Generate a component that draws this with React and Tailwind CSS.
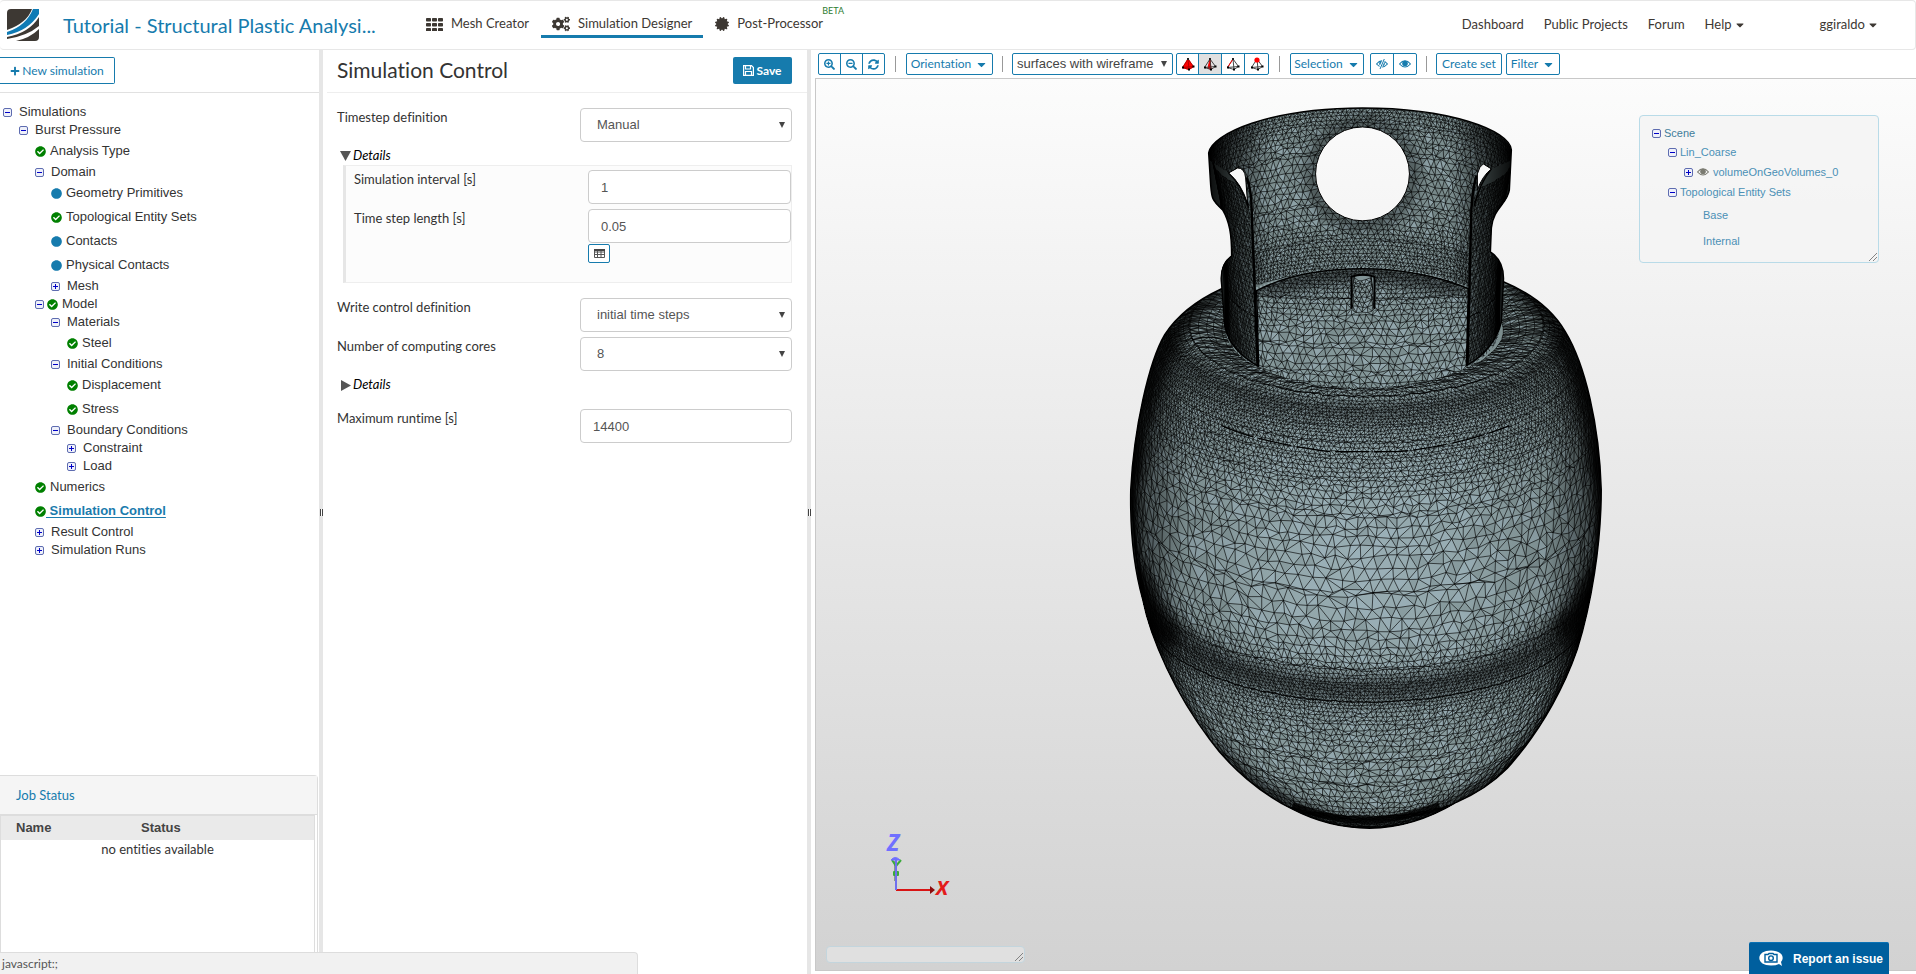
import React, { useMemo, useState } from 'react'
import { FaCogs, FaCertificate, FaPlus, FaCheckCircle, FaCircle, FaSearchPlus, FaSearchMinus, FaSyncAlt, FaCaretDown } from 'react-icons/fa'

const treeNodes = [
    { label: 'Simulations', depth: 0, open: true },
    { label: 'Burst Pressure', depth: 1, open: true },
    { label: 'Analysis Type', depth: 2, status: 'done' },
    { label: 'Domain', depth: 2, open: true },
    { label: 'Geometry Primitives', depth: 3, status: 'info' },
    { label: 'Topological Entity Sets', depth: 3, status: 'done' },
    { label: 'Contacts', depth: 3, status: 'info' },
    { label: 'Physical Contacts', depth: 3, status: 'info' },
    { label: 'Mesh', depth: 3, open: false },
    { label: 'Model', depth: 2, open: true, status: 'done' },
    { label: 'Materials', depth: 3, open: true },
    { label: 'Steel', depth: 4, status: 'done' },
    { label: 'Initial Conditions', depth: 3, open: true },
    { label: 'Displacement', depth: 4, status: 'done' },
    { label: 'Stress', depth: 4, status: 'done' },
    { label: 'Boundary Conditions', depth: 3, open: true },
    { label: 'Constraint', depth: 4, open: false },
    { label: 'Load', depth: 4, open: false },
    { label: 'Numerics', depth: 2, status: 'done' },
    { label: 'Simulation Control', depth: 2, status: 'done', active: true },
    { label: 'Result Control', depth: 2, open: false },
    { label: 'Simulation Runs', depth: 2, open: false },
]

const indents = ['pl-[3px]', 'pl-[19px]', 'pl-[35px]', 'pl-[51px]', 'pl-[67px]']

function makeRandom(seed) {
    let s = seed
    return () => {
        s = (s * 1664525 + 1013904223) % 4294967296
        return s / 4294967296
    }
}

// Resample a list of [y, r, k, spacing, from, to] stations into rings of points
function buildRings(stations, cx, random) {
    const rings = []
    for (let i = 0; i < stations.length - 1; i++) {
        const a = stations[i]
        const b = stations[i + 1]
        const len = Math.hypot(b[0] - a[0] + (b[1] * b[2] - a[1] * a[2]), (b[1] - a[1]) * 0.4)
        let t = 0
        while (t < 1) {
            const [y, r, k, gap, from, to] = a.map((v, j) => v + (b[j] - v) * t)
            const count = Math.max(4, Math.round((Math.abs(to - from) * r) / (gap * 1.15)))
            const step = (to - from) / count
            const shift = rings.length % 2 ? 0.5 : 0
            const ring = []
            for (let n = 0; n <= count; n++) {
                const angle = from + step * (n + shift + (random() - 0.5) * 0.5)
                const bump = (random() - 0.5) * gap * 0.5
                ring.push([cx + r * Math.sin(angle), y + bump + r * k * Math.cos(angle), angle])
            }
            rings.push(ring)
            t += gap / Math.max(len, 1)
        }
    }
    return rings
}

// Join neighbouring rings with triangles, always advancing on the ring that lags behind
function buildMesh(stations, cx, seed) {
    const random = makeRandom(seed)
    const rings = buildRings(stations, cx, random)
    const p = (v) => `${v[0].toFixed(1)} ${v[1].toFixed(1)}`
    let lines = ''
    let light = ''
    let dark = ''
    rings.forEach((ring, i) => {
        lines += 'M' + ring.map(p).join('L')
        const next = rings[i + 1]
        if (!next) return
        let a = 0
        let b = 0
        while (a < ring.length - 1 || b < next.length - 1) {
            const moveA = b >= next.length - 1 || (a < ring.length - 1 && ring[a + 1][2] < next[b + 1][2])
            const tip = moveA ? ring[a + 1] : next[b + 1]
            const face = `M${p(ring[a])}L${p(next[b])}L${p(tip)}Z`
            const roll = random()
            if (roll < 0.25) light += face
            else if (roll > 0.8) dark += face
            lines += `M${p(ring[a])}L${p(next[b])}`
            if (moveA) a++
            else b++
        }
    })
    return { lines, light, dark }
}

const FULL = Math.PI
const bodyStations = [
    [331, 137, 0.4, 3.6, -FULL, FULL],
    [327, 160, 0.4, 4.4, -FULL, FULL],
    [326, 178, 0.4, 4.4, -2.6, 2.6],
    [332, 196, 0.4, 3.2, -2.2, 2.2],
    [345, 208, 0.4, 3.2, -1.9, 1.9],
    [358, 215, 0.4, 4.2, -1.75, 1.75],
    [372, 219, 0.4, 4.4, -1.7, 1.7],
    [392, 224, 0.4, 5.5, -1.6, 1.6],
    [425, 231, 0.41, 9, -1.57, 1.57],
    [500, 235, 0.41, 12.5, -1.57, 1.57],
    [545, 232, 0.41, 9, -1.57, 1.57],
    [578, 227, 0.41, 4.6, -1.57, 1.57],
    [594, 225, 0.41, 3.2, -1.57, 1.57],
    [612, 221, 0.41, 3.4, -1.57, 1.57],
    [638, 215, 0.41, 5.2, -1.55, 1.55],
    [684, 195, 0.41, 7, -1.5, 1.5],
    [714, 177, 0.41, 7, -1.45, 1.45],
    [740, 157, 0.41, 5.6, -1.4, 1.4],
    [761, 138, 0.41, 4, -1.25, 1.25],
    [778, 118, 0.36, 2.8, -1.15, 1.15],
    [792, 98, 0.36, 2.4, -1.1, 1.1],
    [800, 80, 0.36, 2.4, -1.1, 1.1],
]
const domeStations = [
    [262, 150, 0.06, 3.2, -1.57, 1.57],
    [288, 150, 0.08, 5, -1.57, 1.57],
    [330, 150, 0.12, 8.5, -1.57, 1.57],
    [352, 150, 0.16, 7, -1.57, 1.57],
    [368, 150, 0.2, 4.4, -1.57, 1.57],
]
const wallStations = [
    [154, 151, -0.3, 3.4, -1.57, 1.57],
    [168, 150, -0.3, 4.6, -1.57, 1.57],
    [195, 147, -0.28, 7, -1.57, 1.57],
    [245, 141, -0.28, 6.6, -1.57, 1.57],
    [280, 138, -0.28, 4, -1.57, 1.57],
    [312, 137, -0.28, 3.4, -1.57, 1.57],
]
const panelStations = (from, to) => [
    [160, 150, 0.3, 4, from, to],
    [200, 142, 0.3, 4.6, from, to],
    [285, 137, 0.38, 4.8, from, to],
    [334, 137, 0.4, 3.8, from, to],
]
const valveStations = [
    [277, 9, 0.4, 4, -1.6, 1.6],
    [284, 10, 0.4, 5, -1.6, 1.6],
    [310, 12, 0.4, 5, -1.6, 1.6],
]

const BODY = 'M1222 289C1196 301 1176 318 1165 335C1149 362 1134 430 1131 490C1130 540 1136 575 1143 600C1151 640 1176 695 1210 740C1230 768 1262 795 1293 810C1316 822 1343 829 1370 829C1402 829 1432 818 1457 803C1476 795 1494 783 1508 769C1545 728 1567 682 1578 650C1592 605 1602 545 1602 490C1600 425 1586 365 1566 332C1552 308 1528 292 1504 282L1363 250Z'
const COLLAR = 'M1209 153C1212 134 1270 108 1363 108C1450 108 1510 130 1512 150L1510 190C1508 204 1494 208 1492 228L1491 252C1500 258 1505 268 1504 282L1502 322C1498 340 1485 356 1467 366L1469 289C1440 276 1400 269 1363 269C1320 269 1285 276 1257 291L1259 367C1240 356 1229 344 1225 326L1222 285C1220 270 1224 262 1232 256C1232 235 1230 222 1223 210C1212 200 1212 198 1211 185Z'
const HOLES = 'M1316 174a47 47 0 1 0 94 0a47 47 0 1 0 -94 0ZM1229 173L1238 168Q1245 168 1246 178L1248 204Q1242 184 1229 173ZM1478 190L1478 174Q1480 166 1484 164L1492 169Q1483 176 1478 190Z'

function MeshLayer({ mesh, width = 0.8 }) {
    return (
        <>
            <path d={mesh.light} fill="#9db4bd" fillOpacity="0.5" />
            <path d={mesh.dark} fill="#5f7070" fillOpacity="0.2" />
            <path d={mesh.lines} fill="none" stroke="#000" strokeWidth={width} strokeOpacity="0.8" />
        </>
    )
}

function TankModel() {
    const meshes = useMemo(() => ({
        body: buildMesh(bodyStations, 1367, 7),
        dome: buildMesh(domeStations, 1363, 21),
        wall: buildMesh(wallStations, 1361, 33),
        left: buildMesh(panelStations(-1.57, -0.75), 1363, 5),
        right: buildMesh(panelStations(0.75, 1.57), 1363, 9),
        valve: buildMesh(valveStations, 1363, 11),
    }), [])

    return (
        <svg className="absolute inset-0 w-full h-full" viewBox="816 79 1101 892" role="img" aria-label="Meshed gas tank">
            <defs>
                <linearGradient id="side">
                    <stop offset="0" stopColor="#000" stopOpacity="0.95" />
                    <stop offset="0.03" stopColor="#000" stopOpacity="0.5" />
                    <stop offset="0.12" stopColor="#000" stopOpacity="0.1" />
                    <stop offset="0.3" stopColor="#000" stopOpacity="0" />
                    <stop offset="0.7" stopColor="#000" stopOpacity="0" />
                    <stop offset="0.88" stopColor="#000" stopOpacity="0.1" />
                    <stop offset="0.97" stopColor="#000" stopOpacity="0.5" />
                    <stop offset="1" stopColor="#000" stopOpacity="0.95" />
                </linearGradient>
                <linearGradient id="wallSide">
                    <stop offset="0" stopColor="#000" stopOpacity="0.9" />
                    <stop offset="0.12" stopColor="#000" stopOpacity="0.4" />
                    <stop offset="0.2" stopColor="#000" stopOpacity="0" />
                    <stop offset="0.8" stopColor="#000" stopOpacity="0" />
                    <stop offset="0.88" stopColor="#000" stopOpacity="0.4" />
                    <stop offset="1" stopColor="#000" stopOpacity="0.9" />
                </linearGradient>
                <radialGradient id="shell" gradientUnits="userSpaceOnUse" cx="1366" cy="560" r="290">
                    <stop offset="0" stopColor="#9aafb5" />
                    <stop offset="1" stopColor="#7f9191" />
                </radialGradient>
                <filter id="soft" x="-20%" y="-20%" width="140%" height="140%">
                    <feGaussianBlur stdDeviation="7" />
                </filter>
                <clipPath id="bodyClip"><path d={BODY} /></clipPath>
                <clipPath id="domeClip"><ellipse cx="1363" cy="330" rx="137" ry="58" /></clipPath>
                <clipPath id="collarClip"><path d={COLLAR + HOLES} clipRule="evenodd" /></clipPath>
                <clipPath id="leftClip"><path d="M1209 160L1229 173Q1244 188 1250 210L1259 368L1209 368Z" /></clipPath>
                <clipPath id="rightClip"><path d="M1513 160L1492 169Q1478 186 1474 204L1467 368L1513 368Z" /></clipPath>
            </defs>

            <g clipPath="url(#bodyClip)">
                <path d={BODY} fill="url(#shell)" />
                <MeshLayer mesh={meshes.body} />
                <g fill="none" stroke="#000" filter="url(#soft)">
                    <path d="M1140 590Q1200 690 1366 690T1592 590" strokeWidth="22" strokeOpacity="0.4" />
                    <path d="M1135 570Q1146 612 1175 642M1598 570Q1588 606 1560 636" strokeWidth="24" strokeOpacity="0.8" />
                    <path d="M1172 345Q1230 412 1366 412T1560 345" strokeWidth="14" strokeOpacity="0.35" />
                    <path d="M1131 560C1140 650 1170 710 1210 748C1262 800 1320 829 1370 829C1430 829 1490 790 1520 762C1565 705 1590 650 1602 560" strokeWidth="14" strokeOpacity="0.85" />
                    <path d="M1222 289C1170 312 1145 380 1133 480M1510 284C1570 312 1592 400 1600 480" strokeWidth="18" strokeOpacity="0.8" />
                </g>
                <path d={BODY} fill="url(#side)" />
                <path d="M1222 426Q1260 443 1330 452H1400Q1460 446 1510 426" fill="none" stroke="#000" strokeWidth="1.2" strokeDasharray="34 5" />
                <path d="M1293 806Q1366 836 1440 806" fill="none" stroke="#000" strokeWidth="7" strokeOpacity="0.8" />
            </g>
            <path d={BODY} fill="none" stroke="#000" strokeWidth="1.5" />

            <g clipPath="url(#domeClip)">
                <ellipse cx="1363" cy="330" rx="137" ry="58" fill="#849799" />
                <MeshLayer mesh={meshes.dome} />
            </g>
            <path d="M1262 292Q1363 254 1466 292" fill="none" stroke="#000" strokeWidth="16" strokeOpacity="0.55" filter="url(#soft)" />

            <path d="M1353 276H1374L1376 310Q1364 318 1351 310Z" fill="#829496" />
            <MeshLayer mesh={meshes.valve} />
            <path d="M1352 276V309M1375 276V309M1352 277Q1363 273 1375 277" fill="none" stroke="#000" strokeWidth="2" />

            <g clipPath="url(#collarClip)">
                <path d={COLLAR} fill="#7c8e8f" />
                <MeshLayer mesh={meshes.wall} />
                <circle cx="1363" cy="174" r="50" fill="none" stroke="#000" strokeOpacity="0.5" strokeWidth="12" filter="url(#soft)" />
                <g clipPath="url(#leftClip)">
                    <rect x="1205" y="160" width="60" height="215" fill="#667676" />
                    <MeshLayer mesh={meshes.left} />
                </g>
                <g clipPath="url(#rightClip)">
                    <rect x="1465" y="160" width="50" height="215" fill="#667676" />
                    <MeshLayer mesh={meshes.right} />
                </g>
                <path d={COLLAR} fill="url(#wallSide)" />
                <path d="M1257 290Q1363 250 1469 289" fill="none" stroke="#9db1b4" strokeWidth="5" strokeDasharray="2 2" strokeOpacity="0.8" />
                <path d="M1247 178Q1252 190 1252 210L1258 367M1477 176Q1473 190 1472 210L1468 367" fill="none" stroke="#000" strokeWidth="2.5" />
                <path d="M1229 173Q1243 186 1249 208M1492 169Q1480 184 1475 206" fill="none" stroke="#000" strokeWidth="1.5" />
                <path d="M1224 260Q1227 276 1227 330M1501 262Q1498 290 1498 335" fill="none" stroke="#000" strokeWidth="5" strokeOpacity="0.8" />
            </g>
            <path d={COLLAR} fill="none" stroke="#000" strokeWidth="1.5" />
            <path d={HOLES} fill="none" stroke="#000" strokeWidth="1" />
        </svg>
    )
}

function AxisTriad() {
    return (
        <svg className="absolute left-16 bottom-[70px]" width="88" height="90" viewBox="880 809 88 90">
            <path d="M895 860V880" stroke="#8a9a8a" strokeWidth="2" />
            <path d="M892 859l4 6 5-6M896 864v8" fill="none" stroke="#3cab3c" strokeWidth="2" />
            <rect x="893" y="870" width="6" height="5" rx="1" fill="#3cab3c" />
            <path d="M896 889H932" stroke="#d81414" strokeWidth="2" />
            <path d="M930 885l5 4-5 4Z" fill="#8d0c0c" />
            <path d="M896 889V858" stroke="#6f6fee" strokeWidth="2" />
            <path d="M891 859q4-5 9 0Z" fill="#6f6fff" stroke="#6f6fff" />
            <text x="887" y="850" fontFamily="Noto Sans, sans-serif" fontSize="23" fontWeight="700" fontStyle="italic" fill="#7070ff">Z</text>
            <text x="936" y="894" fontFamily="Noto Sans, sans-serif" fontSize="20" fontWeight="700" fontStyle="italic" fill="#e31b1b">X</text>
        </svg>
    )
}

function Logo() {
    return (
        <svg width="32" height="32" viewBox="0 0 32 32" aria-hidden="true">
            <path d="M4 0H25Q20 14 0 21V4Q0 0 4 0Z" fill="#3d3833" />
            <path d="M26 0H32V5Q21 22 0 26V23Q19 17 26 0Z" fill="#0f7bb5" />
            <path d="M32 8V17Q20 27 0 30V28Q22 24 32 8Z" fill="#3d3833" />
            <path d="M32 20V28Q32 32 28 32H9Q23 29 32 20Z" fill="#3d3833" />
        </svg>
    )
}

function GridIcon() {
    return (
        <svg width="17" height="13" viewBox="0 0 17 13" fill="currentColor" aria-hidden="true">
            {[0, 6, 12].map((x) => [0, 5, 10].map((y) => <rect key={`${x}-${y}`} x={x} y={y} width="5" height="3.6" rx="0.8" />))}
        </svg>
    )
}

function TableIcon() {
    return (
        <svg width="11" height="9" viewBox="0 0 11 9" aria-hidden="true">
            <path d="M0.5 0.5H10.5V8.5H0.5ZM0.5 3H10.5M0.5 5.5H10.5M3.5 1V8.5M7 1V8.5" fill="none" stroke="#555" />
            <path d="M0 1H11" stroke="#444" strokeWidth="2" />
        </svg>
    )
}

function Toggle({ open }) {
    return (
        <svg className="shrink-0" width="9" height="9" viewBox="0 0 9 9" aria-hidden="true">
            <rect x="0.5" y="0.5" width="8" height="8" rx="1.5" fill="#eef0fa" stroke="#5e6cb0" />
            <path d={open ? 'M2 4.5H7' : 'M2 4.5H7M4.5 2V7'} stroke="#0000c8" />
        </svg>
    )
}

function EyeIcon({ crossed, className }) {
    return (
        <svg className={className} width="12" height="12" viewBox="0 0 12 12" aria-hidden="true">
            <path d="M0.5 6Q6 -0.5 11.5 6Q6 12 0.5 6Z" fill="none" stroke="currentColor" strokeWidth="1.1" />
            <circle cx="6" cy="5.5" r="2.8" fill="currentColor" />
            {crossed && <path d="M8.5 0.5L3.5 11.5" stroke="#fff" strokeWidth="2.6" />}
            {crossed && <path d="M8.3 1L4 11" stroke="currentColor" strokeWidth="1" />}
        </svg>
    )
}

function TetIcon({ mode }) {
    return (
        <svg width="14" height="14" viewBox="0 0 14 14" aria-hidden="true">
            {mode === 'solid' && <path d="M7 1L1 11L8 13L13 10Z" fill="#f00" />}
            {mode === 'face' && <path d="M7 2L5 11L8 12.5Z" fill="#f00" stroke="#f00" />}
            <path d="M7 2L1.5 10.5L8 12.5L12.5 9.5ZM7 2L8 12.5M1.5 10.5L12.5 9.5" fill="none" stroke={mode === 'solid' ? '#a00' : '#333'} strokeWidth="0.9" />
            {mode === 'edge' && <path d="M7 2L1.5 10.5" stroke="#f00" />}
            <path d="M1 9.5h2v2H1ZM7 11.5h2v2H7ZM11.5 8.5h2v2h-2Z" fill="#000" />
            {mode === 'point' ? <circle cx="7" cy="3" r="2.6" fill="#f00" /> : <path d="M6 1h2v2H6Z" fill="#222" />}
        </svg>
    )
}

function ResizeGrip() {
    return (
        <svg className="absolute right-px bottom-px" width="8" height="8" viewBox="0 0 8 8" aria-hidden="true">
            <path d="M0 8L8 0M4 8L8 4" stroke="#777" strokeWidth="0.9" />
        </svg>
    )
}

function TreeRow({ node, onSelect }) {
    const branch = node.open !== undefined
    return (
        <li className={`flex items-center ${branch ? 'h-[18px]' : 'h-6'} ${indents[node.depth]}`}>
            {branch && <Toggle open={node.open} />}
            {node.status === 'done' && <FaCheckCircle size={11} className={`shrink-0 text-[#008000] ${branch ? 'ml-[3px]' : ''}`} />}
            {node.status === 'info' && <FaCircle size={11} className="shrink-0 text-[#167bad]" />}
            <a
                href="#"
                onClick={(e) => { e.preventDefault(); onSelect(node.label) }}
                className={node.active
                    ? 'whitespace-pre font-bold text-[#1a7bad] underline underline-offset-2'
                    : `text-[#333] ${node.status ? 'ml-1' : 'ml-[7px]'}`}
            >
                {node.active ? ' ' + node.label : node.label}
            </a>
        </li>
    )
}

function Splitter() {
    return (
        <div className="w-1 shrink-0 bg-[#e6e6e6] flex flex-col items-center justify-center">
            <div className="w-[3px] h-[7px] border-x border-[#444] bg-white"></div>
        </div>
    )
}

function FormRow({ id, label, className, children }) {
    return (
        <div className={`flex justify-between items-start ${className}`}>
            <label htmlFor={id} className="leading-[18px]">{label}</label>
            {children}
        </div>
    )
}

const fieldClass = "h-[34px] border border-[#ccc] rounded bg-white text-[13px] text-[#555] font-['Liberation_Sans',sans-serif]"

function SelectField({ id, options }) {
    return (
        <span className="relative block w-[212px]">
            <select id={id} className={`${fieldClass} w-full appearance-none pl-4`}>
                {options.map((o) => <option key={o}>{o}</option>)}
            </select>
            <svg className="absolute right-[7px] top-[14px] pointer-events-none" width="6" height="6" viewBox="0 0 6 6"><path d="M0 0H6L3 6Z" fill="#444" /></svg>
        </span>
    )
}

const toolClass = 'h-[22px] border border-[#167bad] rounded-xs bg-white text-[#167bad] text-[12px] flex items-center justify-center'

function Separator({ tight }) {
    return <span className={`w-px h-4 bg-[#999] ${tight ? 'mx-[9px]' : 'mx-[10px]'}`}></span>
}

function Header() {
    return (
        <header className="h-[50px] shrink-0 border border-[#e7e7e7] border-l-0 rounded flex items-center text-[13px] text-[#3d3833]">
            <div className="flex items-center pl-[7px] w-[415px] shrink-0">
                <Logo />
                <a href="#" className="ml-6 text-[20px] leading-6 text-[#167bad] whitespace-nowrap">Tutorial - Structural Plastic Analysi...</a>
            </div>
            <nav className="flex items-center h-full pb-[2px]">
                <a href="#" className="flex items-center gap-2 px-[11px]">
                    <GridIcon /> Mesh Creator
                </a>
                <a href="#" className="flex items-center gap-2 px-[11px] ml-[1px] h-7 pt-[3px] border-b-3 border-[#167bad]">
                    <FaCogs size={18} /> Simulation Designer
                </a>
                <a href="#" className="relative flex items-center gap-2 px-3">
                    <FaCertificate size={14} /> Post-Processor
                    <span className="absolute left-[119px] -top-[9px] text-[9px] leading-3 text-[#2e7d32]">BETA</span>
                </a>
            </nav>
            <nav className="ml-auto flex items-center gap-5 pr-9">
                <a href="#">Dashboard</a>
                <a href="#">Public Projects</a>
                <a href="#">Forum</a>
                <button type="button" className="flex items-center gap-[2px]">Help <FaCaretDown size={12} /></button>
                <button type="button" className="flex items-center gap-[2px] ml-[54px]">ggiraldo <FaCaretDown size={12} /></button>
            </nav>
        </header>
    )
}

function Sidebar({ onSelect }) {
    return (
        <aside className="w-[319px] shrink-0 flex flex-col">
            <div className="h-[43px] shrink-0 border-b border-[#e1e1e1] pt-[7px]">
                <button type="button" className="h-[27px] w-[115px] border border-l-0 border-[#167bad] rounded-r-xs text-[12px] text-[#167bad] flex items-center justify-center gap-[2px]">
                    <FaPlus size={10} /> New simulation
                </button>
            </div>
            <ul className="pt-[10px] flex-1 font-['Liberation_Sans',sans-serif] text-[13px]">
                {treeNodes.map((node) => <TreeRow key={node.label} node={node} onSelect={onSelect} />)}
            </ul>
            <section className="h-[199px] shrink-0 mr-px border-t border-r border-[#ddd] rounded-tr">
                <h2 className="h-[39px] px-4 pt-px flex items-center bg-[#f5f5f5] border-b border-[#ddd] text-[13px] text-[#167bad]">Job Status</h2>
                <div className="h-full mr-[2px] border-x border-t border-[#ddd]">
                    <table className="w-full text-[13px] table-fixed">
                        <thead>
                            <tr className="h-6 bg-[#eaeaea] text-left font-['Liberation_Sans',sans-serif] text-[#444]">
                                <th className="w-[125px] pl-[15px]">Name</th>
                                <th className="pl-[15px]">Status</th>
                            </tr>
                        </thead>
                        <tbody>
                            <tr><td colSpan={2} className="text-center leading-[18px]">no entities available</td></tr>
                        </tbody>
                    </table>
                </div>
            </section>
        </aside>
    )
}

function ControlForm() {
    const [interval, setInterval] = useState('1')
    const [stepLength, setStepLength] = useState('0.05')
    const [runtime, setRuntime] = useState('14400')

    return (
        <main className="w-[484px] shrink-0 pl-1">
            <div className="h-[43px] border-b border-[#eee] flex items-start justify-between pt-[7px] pl-[10px] pr-[15px]">
                <h1 className="text-[21px] leading-[26px]">Simulation Control</h1>
                <button type="button" className="h-[27px] w-[59px] rounded-xs bg-[#167bad] text-white text-[12px] font-bold flex items-center justify-center gap-[2px]">
                    <svg width="11" height="11" viewBox="0 0 11 11" aria-hidden="true">
                        <path d="M0.6 0.6H8.5L10.4 2.5V10.4H0.6ZM2.5 0.6V4H7.5V0.6M2.5 10.4V6.5H8.5V10.4" fill="none" stroke="#fff" strokeWidth="1.2" />
                    </svg>
                    Save
                </button>
            </div>
            <form className="pl-[10px] pr-[15px] pt-[15px] text-[13px]" onSubmit={(e) => e.preventDefault()}>
                <FormRow id="timestep" label="Timestep definition">
                    <SelectField id="timestep" options={['Manual', 'Automatic']} />
                </FormRow>
                <button type="button" className="mt-[5px] ml-[3px] h-[18px] flex items-center gap-[2px] italic text-black">
                    <svg width="11" height="10" viewBox="0 0 11 10" aria-hidden="true"><path d="M0 0H11L5.5 10Z" fill="#555" /></svg>
                    Details
                </button>
                <div className="ml-[6px] h-[118px] bg-[#fcfcfc] border border-[#eee] border-l-3 border-l-[#e6e6e6] pl-2 pt-1">
                    <FormRow id="interval" label="Simulation interval [s]">
                        <input id="interval" type="text" value={interval} onChange={(e) => setInterval(e.target.value)} className={`${fieldClass} w-[203px] px-3`} />
                    </FormRow>
                    <FormRow id="steplength" label="Time step length [s]" className="mt-[5px]">
                        <div>
                            <input id="steplength" type="text" value={stepLength} onChange={(e) => setStepLength(e.target.value)} className={`${fieldClass} block w-[203px] px-3`} />
                            <button type="button" aria-label="Open table" className="mt-px w-[22px] h-[19px] border border-[#167bad] rounded-xs bg-white flex items-center justify-center">
                                <TableIcon />
                            </button>
                        </div>
                    </FormRow>
                </div>
                <FormRow id="writecontrol" label="Write control definition" className="mt-[15px]">
                    <SelectField id="writecontrol" options={['initial time steps', 'all time steps']} />
                </FormRow>
                <FormRow id="cores" label="Number of computing cores" className="mt-[5px]">
                    <SelectField id="cores" options={['8', '16', '32']} />
                </FormRow>
                <button type="button" className="mt-[5px] ml-[4px] h-[18px] flex items-center gap-[2px] italic text-black">
                    <svg width="10" height="11" viewBox="0 0 10 11" aria-hidden="true"><path d="M0 0V11L10 5.5Z" fill="#555" /></svg>
                    Details
                </button>
                <FormRow id="runtime" label="Maximum runtime [s]" className="mt-[15px]">
                    <input id="runtime" type="text" value={runtime} onChange={(e) => setRuntime(e.target.value)} className={`${fieldClass} w-[212px] px-3`} />
                </FormRow>
            </form>
        </main>
    )
}

function ViewerToolbar() {
    return (
        <div className="h-[28px] shrink-0 pl-[3px] flex items-center">
            <div className={`${toolClass} divide-x divide-[#167bad]`}>
                <button type="button" aria-label="Zoom in" className="w-[22px] h-full flex items-center justify-center"><FaSearchPlus size={11} /></button>
                <button type="button" aria-label="Zoom out" className="w-[22px] h-full flex items-center justify-center"><FaSearchMinus size={11} /></button>
                <button type="button" aria-label="Reset view" className="w-[21px] h-full flex items-center justify-center"><FaSyncAlt size={11} /></button>
            </div>
            <Separator />
            <button type="button" className={`${toolClass} w-[87px] gap-1`}>Orientation <FaCaretDown size={13} /></button>
            <Separator tight />
            <span className="relative mr-[3px]">
                <select aria-label="Render mode" className="block h-[22px] w-[161px] pl-1 appearance-none border border-[#167bad] rounded-xs bg-white text-[13px] text-[#444] font-['Liberation_Sans',sans-serif]">
                    <option>surfaces with wireframe</option>
                    <option>surfaces</option>
                </select>
                <svg className="absolute right-[6px] top-2 pointer-events-none" width="6" height="6" viewBox="0 0 6 6"><path d="M0 0H6L3 6Z" fill="#444" /></svg>
            </span>
            <div className={`${toolClass} divide-x divide-[#167bad]`}>
                <button type="button" aria-label="Pick volume" className="w-[22px] h-full flex items-center justify-center"><TetIcon mode="solid" /></button>
                <button type="button" aria-label="Pick face" className="w-[23px] h-full flex items-center justify-center bg-[#e0e0e0]"><TetIcon mode="face" /></button>
                <button type="button" aria-label="Pick edge" className="w-[23px] h-full flex items-center justify-center"><TetIcon mode="edge" /></button>
                <button type="button" aria-label="Pick point" className="w-[23px] h-full flex items-center justify-center"><TetIcon mode="point" /></button>
            </div>
            <Separator />
            <button type="button" className={`${toolClass} w-[74px] gap-1`}>Selection <FaCaretDown size={13} /></button>
            <div className={`${toolClass} divide-x divide-[#167bad] ml-[6px]`}>
                <button type="button" aria-label="Hide" className="w-[23px] h-full flex items-center justify-center"><EyeIcon crossed /></button>
                <button type="button" aria-label="Show" className="w-[22px] h-full flex items-center justify-center"><EyeIcon /></button>
            </div>
            <Separator tight />
            <button type="button" className={`${toolClass} w-[66px]`}>Create set</button>
            <button type="button" className={`${toolClass} w-[54px] ml-1 gap-1`}>Filter <FaCaretDown size={13} /></button>
        </div>
    )
}

function ScenePanel() {
    return (
        <div className="absolute right-[37px] top-[36px] w-[240px] h-[148px] rounded border border-[#b9dbe8] bg-[#f4f4f4]/80 text-[11px] font-medium font-['Liberation_Sans',sans-serif] text-[#4b90b6]">
            <ul className="pt-2">
                <li className="h-[19px] flex items-center gap-[3px] pl-3 text-[#3f7d9b]"><Toggle open /> Scene</li>
                <li className="h-[19px] flex items-center gap-[3px] pl-7"><Toggle open /> Lin_Coarse</li>
                <li className="h-5 flex items-center gap-1 pl-11"><Toggle open={false} /> <EyeIcon className="text-[#7a7a70]" /> volumeOnGeoVolumes_0</li>
                <li className="h-5 flex items-center gap-[3px] pl-7"><Toggle open /> Topological Entity Sets</li>
                <li className="h-[26px] flex items-center pl-[63px]">Base</li>
                <li className="h-[26px] flex items-center pl-[63px]">Internal</li>
            </ul>
            <ResizeGrip />
        </div>
    )
}

function App() {
    const [, setSelected] = useState('Simulation Control')

    return (
        <div className="relative h-screen flex flex-col overflow-hidden bg-white font-['Lato',sans-serif] text-[13px] text-[#333] [font-variant-ligatures:none]">
            <Header />
            <div className="flex-1 min-h-0 flex">
                <Sidebar onSelect={setSelected} />
                <Splitter />
                <ControlForm />
                <Splitter />
                <section className="flex-1 min-w-0 flex flex-col pl-1 pb-[3px]">
                    <ViewerToolbar />
                    <div className="relative flex-1 border border-r-0 border-[#c8c8c8] bg-linear-to-b from-[#fcfcfc] to-[#d2d2d2]">
                        <TankModel />
                        <AxisTriad />
                        <ScenePanel />
                        <div className="absolute left-[10px] bottom-[7px] w-[199px] h-[17px] rounded border border-[#c3d5dd] bg-[#e0e0e0]">
                            <ResizeGrip />
                        </div>
                    </div>
                </section>
            </div>
            <button type="button" className="absolute right-[27px] bottom-0 w-[140px] h-8 rounded-t-xs bg-[#005f9e] border-t border-[#0a72b5] text-white text-[12px] font-bold font-['Liberation_Sans',sans-serif] flex items-center gap-[10px] pl-[10px]">
                <svg width="24" height="17" viewBox="0 0 24 17" aria-hidden="true">
                    <path d="M12 0.5C5 0.5 0.3 3.5 0.3 8S5 15.5 12 15.5Q17 15.5 20 14L23 16L22 12Q23.7 10 23.7 8C23.7 3.5 19 0.5 12 0.5Z" fill="#fff" />
                    <path d="M6 4.5H9L10 3.5H14L15 4.5H18V12H6Z" fill="none" stroke="#005f9e" strokeWidth="1.4" />
                    <circle cx="12" cy="8.2" r="2.3" fill="none" stroke="#005f9e" strokeWidth="1.4" />
                </svg>
                Report an issue
            </button>
            <div className="absolute left-0 bottom-0 w-[638px] h-[22px] bg-[#f1f1f1] border border-b-0 border-l-0 border-[#ddd] rounded-tr px-[2px] flex items-center text-[12px] text-[#555]">javascript:;</div>
        </div>
    )
}

export default App
